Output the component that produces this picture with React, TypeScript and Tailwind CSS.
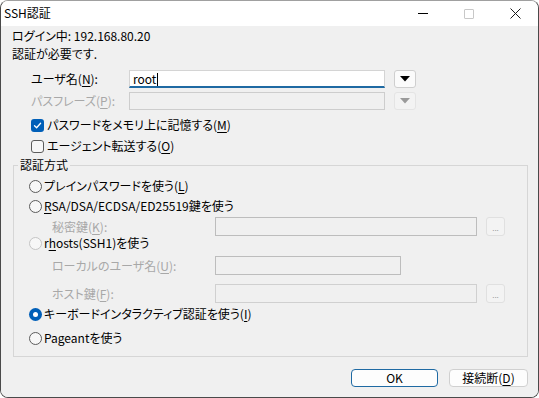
import { ReactNode } from "react";

const disabledText = "text-[#a8a8a8]";

function U({ children }: { children: ReactNode }) {
  return <span className="underline underline-offset-[2px]">{children}</span>;
}

function Checkbox({ checked }: { checked?: boolean }) {
  return checked ? (
    <span className="flex h-[13px] w-[13px] items-center justify-center rounded-[3px] bg-[#005fb8]">
      <svg width="9" height="9" viewBox="0 0 9 9" fill="none">
        <path d="M1.5 4.8 L3.6 6.8 L7.6 2.2" stroke="white" strokeWidth="1.3" strokeLinecap="round" strokeLinejoin="round" />
      </svg>
    </span>
  ) : (
    <span className="h-[13px] w-[13px] rounded-[3px] border border-[#5c5c5c] bg-[#f7f7f7]" />
  );
}

function Radio({ checked, disabled }: { checked?: boolean; disabled?: boolean }) {
  if (checked) {
    return (
      <span className="flex h-[13px] w-[13px] items-center justify-center rounded-full bg-[#005fb8]">
        <span className="h-[5px] w-[5px] rounded-full bg-white" />
      </span>
    );
  }
  return (
    <span
      className={`h-[13px] w-[13px] rounded-full border bg-[#f7f7f7] ${
        disabled ? "border-[#c5c5c5]" : "border-[#5c5c5c]"
      }`}
    />
  );
}

function DropButton({ disabled }: { disabled?: boolean }) {
  return (
    <span
      className={`ml-[9px] flex h-[18px] w-[22px] items-center justify-center rounded-[3px] border ${
        disabled ? "border-[#e4e4e4] bg-[#f3f3f3]" : "border-[#cfcfcf] bg-[#fbfbfb]"
      }`}
    >
      <svg width="10" height="6" viewBox="0 0 10 6">
        <path d="M0 0 H10 L5 5.5 Z" fill={disabled ? "#9a9a9a" : "#000"} />
      </svg>
    </span>
  );
}

function BrowseButton() {
  return (
    <span className="ml-[9px] flex h-[19px] w-[19px] items-end justify-center rounded-[3px] border border-[#e0e0e0] bg-[#f3f3f3] pb-[3px] text-[8px] leading-none text-[#9a9a9a]">
      ...
    </span>
  );
}

export default function App() {
  return (
    <div className="h-[398px] w-[539px] bg-white font-['Noto_Sans_CJK_JP','Noto_Sans',sans-serif] text-[12px] leading-none text-black [font-feature-settings:'palt']">
      <div className="flex h-[398px] w-[539px] flex-col overflow-hidden rounded-[8px] border border-[#4a4a4a] border-t-[#a0a0a0]">
        {/* title bar */}
        <div className="flex h-[25px] shrink-0 items-center bg-white">
          <span className="pl-[3px] pb-[1px]">SSH認証</span>
          <div className="ml-auto flex h-full">
            <span className="flex w-[46px] items-center justify-center">
              <span className="h-px w-[10px] bg-black" />
            </span>
            <span className="flex w-[46px] items-center justify-center">
              <span className="h-[10px] w-[10px] rounded-[1px] border border-[#c8c8c8]" />
            </span>
            <span className="flex w-[46px] items-center justify-center">
              <svg width="11" height="11" viewBox="0 0 11 11">
                <path d="M0.5 0.5 L10.5 10.5 M10.5 0.5 L0.5 10.5" stroke="#1a1a1a" strokeWidth="1" />
              </svg>
            </span>
          </div>
        </div>

        {/* body */}
        <div className="flex flex-1 flex-col bg-[#f0f0f0] pl-[11px] pr-[10px] pt-[1px]">
          <div className="flex h-[18px] items-center">ログイン中: 192.168.80.20</div>
          <div className="flex h-[18px] items-center">認証が必要です.</div>

          <div className="mt-[7px] flex h-[18px] items-center pl-[19px]">
            <span className="w-[98px]">
              ユーザ名(<U>N</U>):
            </span>
            <span className="flex h-[18px] w-[256px] items-center border border-b-2 border-[#d4d4d4] border-b-[#1f6aa3] bg-white pl-[3px] pt-[1px]">
              root<span className="ml-px h-[13px] w-px bg-black" />
            </span>
            <DropButton />
          </div>

          <div className="mt-[4px] flex h-[18px] items-center pl-[19px]">
            <span className={`w-[98px] ${disabledText}`}>
              パスフレーズ(<U>P</U>):
            </span>
            <span className="h-[18px] w-[256px] border border-[#cdcdcd] bg-[#f0f0f0]" />
            <DropButton disabled />
          </div>

          <div className="mt-[6px] flex h-[18px] items-center gap-[3px] pl-[19px]">
            <Checkbox checked />
            <span>
              パスワードをメモリ上に記憶する(<U>M</U>)
            </span>
          </div>
          <div className="mt-[3px] flex h-[18px] items-center gap-[3px] pl-[19px]">
            <Checkbox />
            <span>
              エージェント転送する(<U>O</U>)
            </span>
          </div>

          {/* auth method group */}
          <fieldset className="ml-[1px] mt-[2px] w-[515px] border border-[#d6d6d6] px-0 pb-[9px]">
            <legend className="ml-[4px] h-[16px] px-[2px] leading-[16px]">認証方式</legend>
            <div className="flex flex-col pl-[15px]">
              <div className="mt-[4px] flex h-[18px] items-center gap-[2px]">
                <Radio />
                <span>
                  プレインパスワードを使う(<U>L</U>)
                </span>
              </div>
              <div className="mt-[2px] flex h-[18px] items-center gap-[2px]">
                <Radio />
                <span>
                  <U>R</U>SA/DSA/ECDSA/ED25519鍵を使う
                </span>
              </div>
              <div className="mt-[2px] flex h-[19px] items-center pl-[23px]">
                <span className={`w-[163px] ${disabledText}`}>
                  秘密鍵(<U>K</U>):
                </span>
                <span className="h-[19px] w-[262px] border border-[#bdbdbd] bg-[#f0f0f0]" />
                <BrowseButton />
              </div>
              <div className="flex h-[14px] items-center gap-[2px]">
                <Radio disabled />
                <span>
                  r<U>h</U>osts(SSH1)を使う
                </span>
              </div>
              <div className="mt-[6px] flex h-[19px] items-center pl-[23px]">
                <span className={`w-[163px] ${disabledText}`}>
                  ローカルのユーザ名(<U>U</U>):
                </span>
                <span className="h-[19px] w-[186px] border border-[#bdbdbd] bg-[#f0f0f0]" />
              </div>
              <div className="mt-[9px] flex h-[19px] items-center pl-[23px]">
                <span className={`w-[163px] ${disabledText}`}>
                  ホスト鍵(<U>F</U>):
                </span>
                <span className="h-[19px] w-[262px] border border-[#d0d0d0] bg-[#f0f0f0]" />
                <BrowseButton />
              </div>
              <div className="mt-[2px] flex h-[18px] items-center gap-[2px]">
                <Radio checked />
                <span>
                  キーボードインタラクティブ認証を使う(<U>I</U>)
                </span>
              </div>
              <div className="mt-[6px] flex h-[18px] items-center gap-[2px]">
                <Radio />
                <span>Pageantを使う</span>
              </div>
            </div>
          </fieldset>

          <div className="mt-[12px] flex h-[18px] justify-end gap-[11px]">
            <span className="flex w-[87px] items-center justify-center rounded-[4px] border border-[#1f6aa3] bg-[#fdfdfd]">
              OK
            </span>
            <span className="flex w-[79px] items-center justify-center rounded-[4px] border border-[#d0d0d0] bg-[#fdfdfd]">
              接続断(<U>D</U>)
            </span>
          </div>
        </div>
      </div>
    </div>
  );
}
